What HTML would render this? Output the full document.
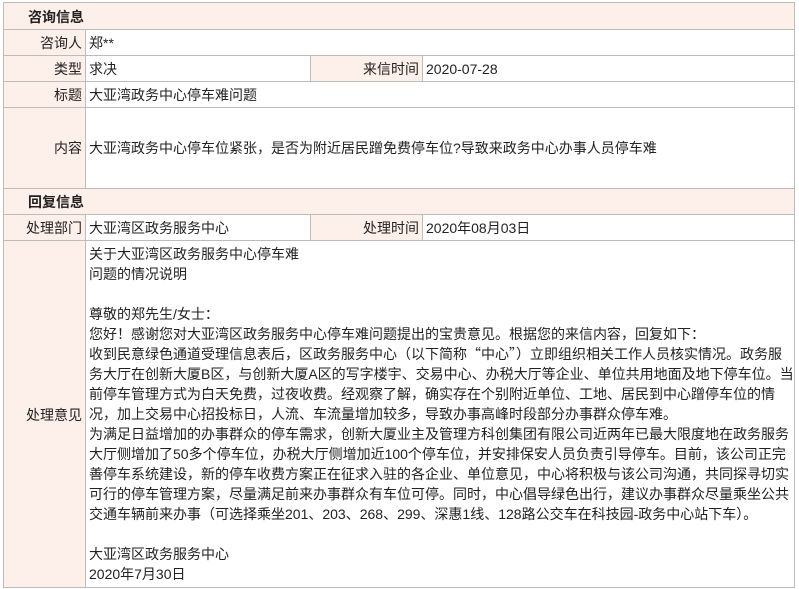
<!DOCTYPE html>
<html><head><meta charset="utf-8"><style>
body{margin:0;width:799px;height:589px;background:#fff;font-family:"Liberation Sans","Noto Sans CJK SC","WenQuanYi Zen Hei",sans-serif;font-size:14px;color:#222;position:relative;overflow:hidden}
.c{position:absolute;box-sizing:border-box;border:1px solid #bcbcbc;white-space:nowrap;line-height:20px}
.l{background:#fdefea;text-align:right;padding-right:3px}
.h{background:#fdefea;font-weight:bold;padding-left:24px}
.v{padding-left:3px}
.q{font-family:"Noto Sans CJK SC",sans-serif}
</style></head><body>
<div class="c h" style="left:3px;top:2px;width:792px;height:28px;padding-top:4px">咨询信息</div>
<div class="c l" style="left:3px;top:29px;width:83px;height:27px;padding-top:3px">咨询人</div>
<div class="c v" style="left:85px;top:29px;width:710px;height:27px;padding-top:3px">郑**</div>
<div class="c l" style="left:3px;top:55px;width:83px;height:27px;padding-top:3px">类型</div>
<div class="c v" style="left:85px;top:55px;width:226px;height:27px;padding-top:3px">求决</div>
<div class="c l" style="left:310px;top:55px;width:113px;height:27px;padding-top:3px">来信时间</div>
<div class="c v" style="left:422px;top:55px;width:373px;height:27px;padding-top:3px">2020-07-28</div>
<div class="c l" style="left:3px;top:81px;width:83px;height:27px;padding-top:3px">标题</div>
<div class="c v" style="left:85px;top:81px;width:710px;height:27px;padding-top:3px">大亚湾政务中心停车难问题</div>
<div class="c l" style="left:3px;top:107px;width:83px;height:82px;padding-top:30px">内容</div>
<div class="c v" style="left:85px;top:107px;width:710px;height:82px;padding-top:30px">大亚湾政务中心停车位紧张，是否为附近居民蹭免费停车位?导致来政务中心办事人员停车难</div>
<div class="c h" style="left:3px;top:188px;width:792px;height:27px;padding-top:3px">回复信息</div>
<div class="c l" style="left:3px;top:214px;width:83px;height:27px;padding-top:3px">处理部门</div>
<div class="c v" style="left:85px;top:214px;width:226px;height:27px;padding-top:3px">大亚湾区政务服务中心</div>
<div class="c l" style="left:310px;top:214px;width:113px;height:27px;padding-top:3px">处理时间</div>
<div class="c v" style="left:422px;top:214px;width:373px;height:27px;padding-top:3px">2020年08月03日</div>
<div class="c l" style="left:3px;top:240px;width:83px;height:348px;padding-top:164px">处理意见</div>
<div class="c v" style="left:85px;top:240px;width:710px;height:348px;padding-top:3px;overflow:hidden">关于大亚湾区政务服务中心停车难<br>问题的情况说明<br><br>尊敬的郑先生/女士：<br>您好！感谢您对大亚湾区政务服务中心停车难问题提出的宝贵意见。根据您的来信内容，回复如下：<br>收到民意绿色通道受理信息表后，区政务服务中心（以下简称<span class="q">“</span>中心<span class="q">”</span>）立即组织相关工作人员核实情况。政务服<br>务大厅在创新大厦B区，与创新大厦A区的写字楼宇、交易中心、办税大厅等企业、单位共用地面及地下停车位。当<br>前停车管理方式为白天免费，过夜收费。经观察了解，确实存在个别附近单位、工地、居民到中心蹭停车位的情<br>况，加上交易中心招投标日，人流、车流量增加较多，导致办事高峰时段部分办事群众停车难。<br>为满足日益增加的办事群众的停车需求，创新大厦业主及管理方科创集团有限公司近两年已最大限度地在政务服务<br>大厅侧增加了50多个停车位，办税大厅侧增加近100个停车位，并安排保安人员负责引导停车。目前，该公司正完<br>善停车系统建设，新的停车收费方案正在征求入驻的各企业、单位意见，中心将积极与该公司沟通，共同探寻切实<br>可行的停车管理方案，尽量满足前来办事群众有车位可停。同时，中心倡导绿色出行，建议办事群众尽量乘坐公共<br>交通车辆前来办事（可选择乘坐201、203、268、299、深惠1线、128路公交车在科技园-政务中心站下车）。<br><br>大亚湾区政务服务中心<br>2020年7月30日</div>
</body></html>
